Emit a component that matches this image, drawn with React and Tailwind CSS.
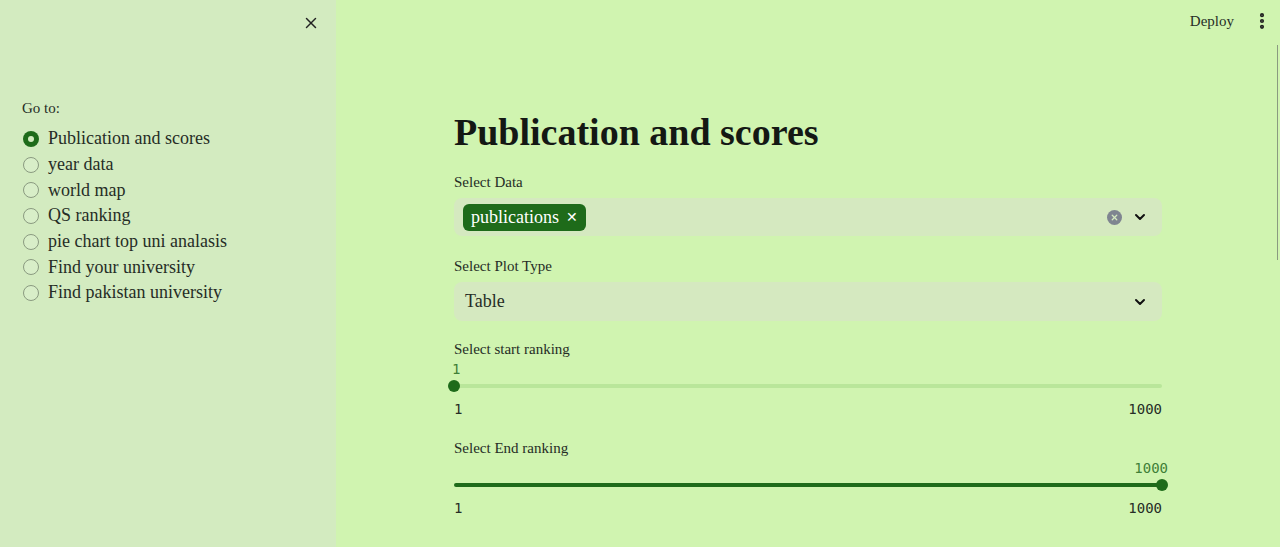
import { X, ChevronDown, EllipsisVertical } from "lucide-react";

const pages = [
  "Publication and scores",
  "year data",
  "world map",
  "QS ranking",
  "pie chart top uni analasis",
  "Find your university",
  "Find pakistan university",
];

function Radio({ checked }) {
  if (checked) {
    return <span className="w-4 h-4 rounded-full bg-[#1e6b1a] flex items-center justify-center shrink-0"><span className="w-1.5 h-1.5 rounded-full bg-[#d3ebc0]"></span></span>;
  }
  return <span className="w-4 h-4 rounded-full border border-[#8a9a80] bg-[#d8eec8] shrink-0"></span>;
}

function Slider({ label, value, fill, first }) {
  return (
    <div className={first ? "mt-[18px]" : "mt-[20px]"}>
      <p className="text-[15px] text-[#262d26] leading-5">{label}</p>
      <div className="relative h-[42px]">
        <span
          className={`absolute top-[2px] text-[14px] leading-[17px] text-[#3f7f37] font-['DejaVu_Sans_Mono',monospace] ${fill ? "right-[-6px]" : "left-[-2px]"}`}
        >
          {value}
        </span>
        <div className={`absolute left-0 right-0 top-[25px] h-1 rounded-full ${fill ? "bg-[#1e6b1a]" : "bg-[#b9e69a]"}`}></div>
        <div className={`absolute top-[21px] w-3 h-3 rounded-full bg-[#1e6b1a] ${fill ? "right-[-6px]" : "left-[-6px]"}`}></div>
      </div>
      <div className="flex justify-between text-[14px] leading-[17px] text-[#262d26] font-['DejaVu_Sans_Mono',monospace]">
        <span>1</span>
        <span>1000</span>
      </div>
    </div>
  );
}

export default function App() {
  return (
    <div className="flex w-full h-[547px] overflow-hidden font-['Liberation_Serif',serif] text-[#1f241f]">
      {/* Sidebar */}
      <aside className="w-[336px] shrink-0 bg-[#d3ebc0] relative">
        <div className="flex justify-end pt-[14px] pr-[16px]">
          <X className="w-[18px] h-[18px] text-[#222]" strokeWidth={2} />
        </div>
        <div className="pl-[22px] pt-[66px]">
          <p className="text-[15px] leading-5 text-[#262d26]">Go to:</p>
          <ul className="mt-[8px] flex flex-col">
            {pages.map((p, i) => (
              <li key={i} className="flex items-center gap-[9px] h-[25.7px] pl-[1px]">
                <Radio checked={i === 0} />
                <span className="text-[18px] text-[#262d26]">{p}</span>
              </li>
            ))}
          </ul>
        </div>
      </aside>

      {/* Main */}
      <main className="flex-1 bg-[#d0f4b0] relative">
        <div className="absolute top-[10px] right-[8px] flex items-center gap-[18px]">
          <span className="text-[15px] text-[#262d26]">Deploy</span>
          <EllipsisVertical className="w-5 h-5 text-[#222]" strokeWidth={3} />
        </div>
        <div className="absolute right-[2px] top-[45px] w-[1px] h-[215px] bg-[#8a9a80]"></div>

        <div className="w-[708px] mx-auto pt-[110px]">
          <h1 className="text-[38px] leading-[44px] font-bold text-[#141814]">Publication and scores</h1>

          <div className="mt-[18px]">
            <p className="text-[15px] leading-5 text-[#262d26]">Select Data</p>
            <div className="mt-[6px] h-[38px] rounded-lg bg-[#d5e9c0] flex items-center pl-[9px] pr-[14px]">
              <span className="h-[27px] px-[8px] rounded-md bg-[#1e6b1a] text-white flex items-center gap-[7px] text-[18px]">
                publications
                <span className="text-[14px] font-['DejaVu_Sans',sans-serif]">✕</span>
              </span>
              <div className="flex-1"></div>
              <span className="w-[15px] h-[15px] rounded-full bg-[#7f8590] flex items-center justify-center mr-[10px]">
                <X className="w-[9px] h-[9px] text-[#d5e9c0]" strokeWidth={3.5} />
              </span>
              <ChevronDown className="w-[16px] h-[16px] text-[#111]" strokeWidth={3} />
            </div>
          </div>

          <div className="mt-[20px]">
            <p className="text-[15px] leading-5 text-[#262d26]">Select Plot Type</p>
            <div className="mt-[6px] h-[39px] rounded-lg bg-[#d5e9c0] flex items-center pl-[11px] pr-[14px]">
              <span className="text-[18px] text-[#262d26]">Table</span>
              <div className="flex-1"></div>
              <ChevronDown className="w-[16px] h-[16px] text-[#111]" strokeWidth={3} />
            </div>
          </div>

          <Slider label="Select start ranking" value="1" fill={false} first />
          <Slider label="Select End ranking" value="1000" fill={true} />
        </div>
      </main>
    </div>
  );
}
